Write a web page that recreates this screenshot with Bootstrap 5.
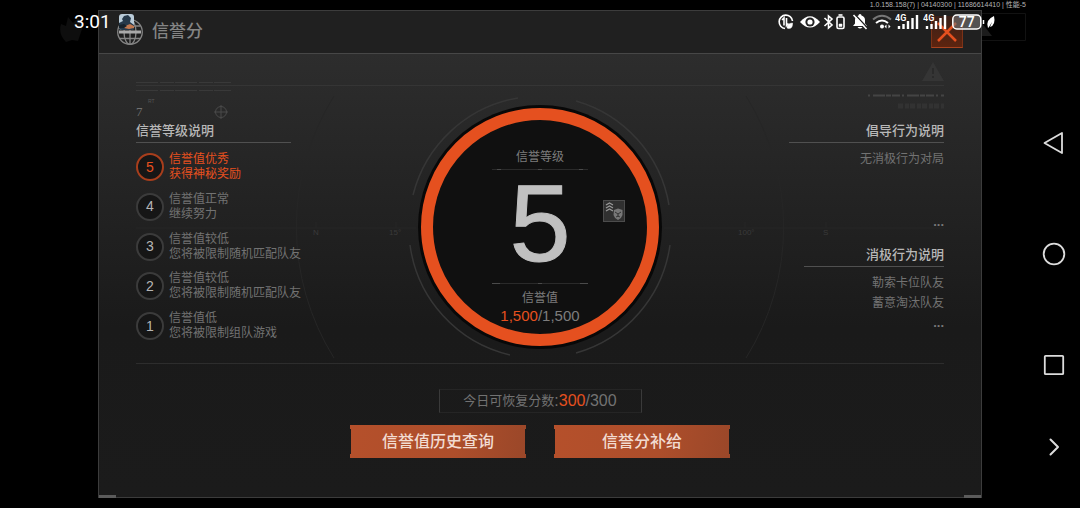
<!DOCTYPE html>
<html lang="zh-CN">
<head>
<meta charset="utf-8">
<meta name="viewport" content="width=device-width, initial-scale=1">
<title>信誉分</title>
<link href="https://cdn.jsdelivr.net/npm/bootstrap@5.3.0/dist/css/bootstrap.min.css" rel="stylesheet">
<style>
  :root { --accent: #e5501f; --dim: #727272; --rule: #505050; }
  body { background: #000; color: var(--dim); font-family: "Liberation Sans", "Noto Sans CJK SC", sans-serif; font-size: 12px; line-height: 15px; }
  svg { display: block; flex: none; }
  .accent { color: var(--accent); }

  /* system status bar */
  .status-bar { z-index: 5; padding: 10px 83px 0 74px; color: #fff; pointer-events: none; }
  .clock { font: 19px/24px Roboto, sans-serif; }
  .build-info { z-index: 5; right: 54px; font-size: 7px; line-height: 10px; color: #b4b4b4; }
  .status-bar text { font-family: Roboto, sans-serif; fill: #fff; }

  /* side gutters */
  .gutter { width: 98px; flex: none; }
  .nav-keys { padding: 131px 13px 0 0; gap: 87px; }
  .nav-keys button { width: 26px; height: 24px; }
  .nav-keys .collapse-key { margin-top: -29px; }
  .bare { background: none; border: 0; padding: 0; display: flex; align-items: center; justify-content: center; }

  /* dialog */
  .dialog-panel { margin: 10px 0; border: solid #3c3c3c; border-width: 1px; background: linear-gradient(#303030, #1f1f1f 50%, #1a1a1a 65%, #1b1b1b); }
  .dialog-panel .corner { position: absolute; width: 17px; height: 3px; background: #5b5b5b; bottom: -1px; }
  .dialog-head { height: 43px; padding: 0 18px; background: #202020; border-bottom: 1px solid #474747; }
  .dialog-head h1 { font-size: 17px; line-height: 24px; font-weight: 500; color: #858585; }
  .close-key { width: 32px; height: 32px; background: linear-gradient(#3a2018, #5d240f); border: 1px solid #7c3217; border-top: 0; border-bottom-color: #a8431f; }
  .dialog-main { margin: 0 37px; border-bottom: 1px solid #2d2d2d; isolation: isolate; }
  .dialog-main::before { content: ""; position: absolute; top: 31px; left: 0; right: 0; border-top: 1px solid #353535; }
  .radar { z-index: -1; }

  .section-head { font-size: 13px; line-height: 17px; font-weight: 500; color: #b8b8b8; padding-bottom: 3px; border-bottom: 1px solid var(--rule); width: 155px; }
  .section-head.narrow { width: 140px; }
  .levels { margin-top: 9px; padding-bottom: 22px; }
  .level-no { width: 28px; height: 28px; border: 2px solid #3b3b3b; border-radius: 50%; background: #161616; color: #b5b5b5; font-size: 14px; }
  .level-no.active { border-color: #a83e1c; color: var(--accent); }
  .level-gap { gap: 5px; }
  .behaviours { font-size: 12px; line-height: 20px; margin-top: 6px; }
  .more { color: #777; font-size: 13px; line-height: 16px; font-weight: 700; }
  .more.last { margin: 2px 0 32px; }

  .gauge-wrap { padding: 54px 0 17px; }
  .gauge { width: 238px; height: 238px; border: 12px solid var(--accent); border-radius: 50%; background: #101010; box-shadow: 0 0 0 3px #080808; padding-top: 29px; color: #7d7d7d; }
  .gauge-digit { font-size: 110px; line-height: 102px; color: #c0c0c0; margin-bottom: 6px; -webkit-text-stroke: 1px #c0c0c0; }
  .gauge-score { font-size: 15px; line-height: 18px; }
  .gauge-label { line-height: 17px; }
  .gauge-badge { left: 170px; top: 80px; }

  .dialog-foot { padding: 25px 0 39px; }
  .quota { width: 203px; height: 24px; border: 1px solid #252525; border-left-color: #3a3a3a; border-right-color: #3a3a3a; font-size: 16px; line-height: 24px; }
  .quota .caption { font-size: 13px; }
  .foot-actions { gap: 28px; margin-top: 12px; }
  .game-btn { --bs-btn-color: #f2dcd2; --bs-btn-hover-color: #fff; width: 176px; height: 33px; padding: 0; border: 0; border-radius: 0; font-size: 16px; line-height: 33px; font-weight: 500;
    background: linear-gradient(100deg, #b5502b, #ad4e2b 60%, #9a4729);
    clip-path: polygon(0 0, 100% 0, 100% 4px, calc(100% - 1px) 4px, calc(100% - 1px) calc(100% - 4px), 100% calc(100% - 4px), 100% 100%, 0 100%, 0 calc(100% - 4px), 1px calc(100% - 4px), 1px 4px, 0 4px); }
  .game-btn:hover { background: #c45a33; }
</style>
</head>
<body>
<div class="position-relative min-vh-100 d-flex overflow-hidden">

  <div class="build-info position-absolute top-0 text-nowrap">1.0.158.158(7) | 04140300 | 11686614410 | 性能-5</div>

  <div class="status-bar position-absolute top-0 start-0 end-0 d-flex align-items-center">
    <span class="clock">3:01</span>
    <svg class="ms-2" width="15" height="16" viewBox="0 0 15 16"><rect width="15" height="16" rx="3" fill="#b9cbd8"/><path d="M3 5l2-3 4-1 3 3-1 4 4 3v3q0 2-3 2H3q-3 0-3-3V9l4-2z" fill="#26394a"/><path d="M6 12l5-2 4 2v2l-5 1-5-1z" fill="#c27950"/><path d="M0 11l5-1 3 2-3 2H0z" fill="#17222b"/></svg>
    <div class="ms-auto d-flex align-items-center">
      <svg width="23" height="20" viewBox="0 0 23 20" fill="none" stroke="#fff" stroke-width="1.6"><path d="M9 16.5A6.700 6.700 0 1 1 16.500 9"/><path d="M6 8l2-2v7.500M10.500 6v7.500l2-2"/><path d="M11 16q-.5-4.500 5.500-5 .5 5.500-4 5.500z" fill="#fff" stroke-width=".5"/></svg>
      <svg width="24" height="20" viewBox="0 0 24 20"><path d="M1 10Q11 -1.500 21 10 11 21 1 10z" fill="#fff"/><circle cx="11" cy="10" r="4.600" fill="#222"/><circle cx="11" cy="10" r="2.600" fill="#fff"/></svg>
      <svg width="29" height="20" viewBox="0 0 29 20" fill="none" stroke="#fff" stroke-width="1.600"><path d="M1.500 6l7.500 7-3.500 3V4L9 7l-7.500 7"/><rect x="14" y="5" width="7" height="11.500" rx="1.500"/><path d="M15.500 3h4"/><path d="M16 12h3v2.500h-3z" fill="#fff" stroke-width=".5"/></svg>
      <svg width="20" height="20" viewBox="0 0 20 20"><path d="M1 14l2-2.500V8q0-3.500 3.500-4.500 0-1.500 1.500-1.500t1.500 1.500Q13 4.500 13 8v3.500l2 2.500zM5.500 15h5q-2.500 3-5 0z" fill="#fff"/><path d="M2.500 2l13 14" stroke="#222" stroke-width="1.500"/><path d="M1.500 3l13 14" stroke="#fff" stroke-width="1.600"/></svg>
      <svg width="23" height="20" viewBox="0 0 23 20" fill="none" stroke="#fff" stroke-width="2"><path d="M1 7.500q9-7.500 18 0" stroke="#777"/><path d="M4 11q6-5 12 0" /><circle cx="10" cy="14.500" r="2" fill="#fff" stroke="none"/><path d="M14.500 12.500v4l-2-2zM16.500 12.500v4l2-2z" fill="#fff" stroke="none"/></svg>
      <svg width="28" height="20" viewBox="0 0 28 20"><text x="0" y="9" font-size="9" font-weight="600">4G</text><path d="M4 14v3M8.500 12v5M13 9v8M17.500 6v11M22 3v14" stroke="#fff" stroke-width="2.400"/></svg>
      <svg width="28" height="20" viewBox="0 0 28 20"><text x="0" y="9" font-size="9" font-weight="600">4G</text><path d="M4 14v3M8.500 12v5M13 9v8M17.500 6v11M22 3v14" stroke="#fff" stroke-width="2.400"/></svg>
      <svg width="46" height="20" viewBox="0 0 46 20"><rect x="1.800" y="3" width="28" height="14" rx="4" fill="#777" fill-opacity=".6" stroke="#fff" stroke-width="1.500"/><text x="15.800" y="15" font-size="14" font-weight="500" text-anchor="middle">77</text><path d="M32.500 8v4" stroke="#fff" stroke-width="1.500"/><path d="M37 16q-3-8 6-12 2 9-4 11l2-5-3 5z" fill="#fff"/></svg>
    </div>
  </div>

  <div class="gutter d-flex justify-content-center pt-3">
    <svg width="26" height="28" viewBox="0 0 26 28" class="ms-5"><path d="M8 1l5 6 5-5q7 6 3 14l-3 9-6-1-6 2Q-2 18 1 8l5 2z" fill="#0e0e0e"/></svg>
  </div>

  <section class="dialog-panel position-relative flex-fill d-flex flex-column" aria-labelledby="dlg-title">
    <i class="corner start-0"></i><i class="corner end-0"></i>
    <header class="dialog-head d-flex align-items-center">
      <svg width="27" height="28" viewBox="0 0 27 28" fill="none" stroke="#858585" stroke-width="1.300"><circle cx="13" cy="14" r="12.300"/><ellipse cx="13" cy="14" rx="6" ry="12.300"/><path d="M13 1.700v24.600M2.500 20.500h21M2.500 8h21"/><path d="M2 14h22" stroke="#aaa" stroke-width="3"/></svg>
      <h1 id="dlg-title" class="mb-0 ms-2">信誉分</h1>
      <button type="button" class="bare close-key ms-auto" aria-label="关闭">
        <svg width="22" height="22" viewBox="0 0 22 22" stroke="#e5501f" stroke-width="2.500"><path d="M2 2l18 18M20 2L2 20"/></svg>
      </button>
    </header>

    <main class="dialog-main position-relative flex-fill d-flex">
      <aside class="col d-flex flex-column">
        <svg width="155" height="68" viewBox="0 0 155 68" fill="none" stroke="#393939"><path d="M0 28.500h95M0 36.500h95" stroke-dasharray="22 2 14 1"/><text x="12" y="49" font-size="5" fill="#555" stroke="none">RT</text><text x="0" y="62" font-family="Liberation Serif, serif" font-size="13" fill="#707070" stroke="none">7</text><g stroke="#4a4a4a"><circle cx="85" cy="58" r="5.500"/><path d="M78 58h14M85 51v14"/></g></svg>
        <h2 class="section-head mb-0">信誉等级说明</h2>
        <ol class="levels list-unstyled mb-0 flex-fill d-flex flex-column justify-content-between">
          <li class="d-flex align-items-center level-gap accent"><span class="level-no active d-flex align-items-center justify-content-center">5</span><span>信誉值优秀<br>获得神秘奖励</span></li>
          <li class="d-flex align-items-center level-gap"><span class="level-no d-flex align-items-center justify-content-center">4</span><span>信誉值正常<br>继续努力</span></li>
          <li class="d-flex align-items-center level-gap"><span class="level-no d-flex align-items-center justify-content-center">3</span><span>信誉值较低<br>您将被限制随机匹配队友</span></li>
          <li class="d-flex align-items-center level-gap"><span class="level-no d-flex align-items-center justify-content-center">2</span><span>信誉值较低<br>您将被限制随机匹配队友</span></li>
          <li class="d-flex align-items-center level-gap"><span class="level-no d-flex align-items-center justify-content-center">1</span><span>信誉值低<br>您将被限制组队游戏</span></li>
        </ol>
      </aside>

      <div class="gauge-wrap d-flex align-items-center position-relative">
        <div class="gauge position-relative d-flex flex-column align-items-center text-nowrap">
          <span class="gauge-label">信誉等级</span>
          <svg width="96" height="6" viewBox="0 0 96 6"><path d="M0 3.500h96" stroke="#2a2a2a"/><path d="M5 3.500h4M46 3.500h4M87 3.500h4" stroke="#4a4a4a"/></svg>
          <strong class="gauge-digit fw-normal">5</strong>
          <svg width="96" height="6" viewBox="0 0 96 6"><path d="M0 3.500h96" stroke="#2a2a2a"/><path d="M0 3.500h8M46 3.500h4M88 3.500h8" stroke="#4a4a4a"/></svg>
          <span class="gauge-label mt-1">信誉值</span>
          <span class="gauge-score"><span class="accent">1,500</span>/1,500</span>
          <svg class="gauge-badge position-absolute" width="22" height="22" viewBox="0 0 22 22" fill="none"><rect x=".5" y=".5" width="21" height="21" fill="#303030" stroke="#4c4c4c"/><path d="M3 5l3.500-2L10 5M3 8l3.500-2L10 8M3 11l3.500-2 3.500 2" stroke="#999" stroke-width="1.200"/><path d="M11 10l4-1.500 4.500 1.500v5q-1 3.500-4.500 5-3.500-1.500-4.500-5z" fill="#777"/><path d="M12 12l3 2 3-2M13 17l2-1 2 1M15 14v3" stroke="#333"/></svg>
        </div>
        <!-- faint radar lines and scale around the gauge -->
        <svg class="radar position-absolute start-50 translate-middle-x pe-none" width="808" height="278" viewBox="0 0 808 278" fill="none" stroke="#262626">
          <g stroke="#363636" stroke-width="1.500"><path d="M277 107A131 131 0 0 1 382 10"/><path d="M440 13A131 131 0 0 1 533 117"/><path d="M274 157A131 131 0 0 0 374 267"/><path d="M534 157A131 131 0 0 1 440 265"/></g>
          <path d="M0 140h280M528 140h280M180 134v6M260 134v6M609 134v6M690 134v6"/>
          <path d="M610 8A247 247 0 0 1 610 270M198 8A247 247 0 0 0 198 270"/>
          <g fill="#3a3a3a" stroke="none" font-size="8"><text x="177" y="147">N</text><text x="253" y="147">15°</text><text x="602" y="147">100°</text><text x="687" y="147">S</text></g>
        </svg>
      </div>

      <aside class="col d-flex flex-column align-items-end text-end">
        <svg width="155" height="68" viewBox="0 0 155 68" fill="none"><path d="M144 8l11 19h-22z" fill="#353535"/><path d="M144 14v6M144 22v2" stroke="#2a2a2a" stroke-width="2"/><path d="M79 41.500h76" stroke="#444" stroke-width="2" stroke-dasharray="2 3 12 1 5 1 8 2"/><path d="M109 52h46" stroke="#323232" stroke-width="5" stroke-dasharray="5 2 4 1"/></svg>
        <h2 class="section-head mb-0">倡导行为说明</h2>
        <ul class="behaviours list-unstyled mb-0"><li>无消极行为对局</li></ul>
        <button type="button" class="bare more mt-auto" aria-label="更多倡导行为">...</button>
        <h2 class="section-head narrow mb-0 mt-3">消极行为说明</h2>
        <ul class="behaviours list-unstyled mb-0"><li>勒索卡位队友</li><li>蓄意淘汰队友</li></ul>
        <button type="button" class="bare more last" aria-label="更多消极行为">...</button>
      </aside>
    </main>

    <footer class="dialog-foot d-flex flex-column align-items-center">
      <div class="quota d-flex align-items-center justify-content-center text-nowrap"><span class="caption">今日可恢复分数</span>:<span class="accent">300</span>/300</div>
      <div class="foot-actions d-flex">
        <button type="button" class="btn game-btn">信誉值历史查询</button>
        <button type="button" class="btn game-btn">信誉分补给</button>
      </div>
    </footer>
  </section>

  <div class="gutter position-relative">
    <svg class="position-absolute top-0 start-0" width="48" height="44" viewBox="0 0 48 44" fill="none"><path d="M0 13.500h43.500v27H0" stroke="#121212"/><path d="M0 23l10 13H0z" fill="#1c1c1c"/></svg>
    <nav class="nav-keys d-flex flex-column align-items-end" aria-label="系统导航">
      <button type="button" class="bare" aria-label="返回"><svg width="24" height="24" viewBox="0 0 24 24" fill="none" stroke="#dcdcdc" stroke-width="1.800" stroke-linejoin="round"><path d="M20 2v20L2.500 12z"/></svg></button>
      <button type="button" class="bare" aria-label="主页"><svg width="24" height="24" viewBox="0 0 24 24" fill="none" stroke="#dcdcdc" stroke-width="1.800"><circle cx="12" cy="12" r="10.300"/></svg></button>
      <button type="button" class="bare" aria-label="最近任务"><svg width="24" height="24" viewBox="0 0 24 24" fill="none" stroke="#dcdcdc" stroke-width="1.800"><rect x="2.800" y="2.800" width="18.400" height="18.400" rx=".8"/></svg></button>
      <button type="button" class="bare collapse-key" aria-label="收起"><svg width="24" height="24" viewBox="0 0 24 24" fill="none" stroke="#dcdcdc" stroke-width="2" stroke-linecap="round" stroke-linejoin="round"><path d="M8.500 4.500l7.500 7.500-7.500 7.500"/></svg></button>
    </nav>
  </div>
</div>
<script src="https://cdn.jsdelivr.net/npm/bootstrap@5.3.0/dist/js/bootstrap.bundle.min.js"></script>
</body>
</html>
